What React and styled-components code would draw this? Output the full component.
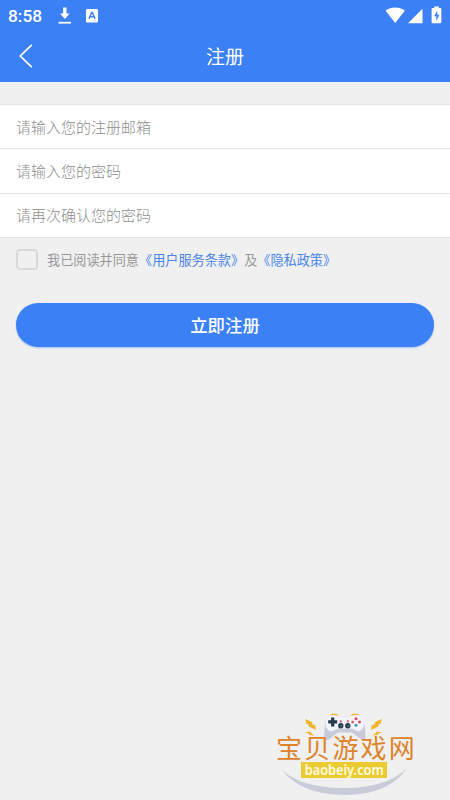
import React from "react";
import styled, { createGlobalStyle } from "styled-components";

const GlobalStyle = createGlobalStyle`
  * {
    box-sizing: border-box;
  }
  body {
    margin: 0;
    background: #f0f0f0;
    font-family: Roboto, "Noto Sans CJK SC", sans-serif;
  }
`;

const App = () => {
  return (
    <Screen lang="zh-CN">
      <GlobalStyle />
      <Header>
        <StatusBar>
          <Clock>8:58</Clock>
          <DownloadIcon />
          <LanguageIcon />
          <StatusRight>
            <SignalIcons />
          </StatusRight>
        </StatusBar>
        <NavBar>
          <BackButton aria-label="返回">
            <svg width="14" height="24" viewBox="0 0 14 24" fill="none" stroke="#fff" strokeWidth="1.7">
              <path d="M12.8 0.8L1.3 12l11.5 11.2" />
            </svg>
          </BackButton>
          <Title>注册</Title>
        </NavBar>
      </Header>
      <Form>
        <Field>
          <Input type="text" placeholder="请输入您的注册邮箱" />
        </Field>
        <Field>
          <Input type="password" placeholder="请输入您的密码" />
        </Field>
        <Field>
          <Input type="password" placeholder="请再次确认您的密码" />
        </Field>
      </Form>
      <Agreement>
        <Checkbox type="checkbox" />
        <span>
          我已阅读并同意<Link>《用户服务条款》</Link>及<Link>《隐私政策》</Link>
        </span>
      </Agreement>
      <Submit>立即注册</Submit>
      <Watermark>
        <SiteLogo />
      </Watermark>
    </Screen>
  );
};

//Icons
const DownloadIcon = () => (
  <svg width="14" height="18" viewBox="0 0 14 18" fill="#fff">
    <path d="M5.1 0.4h3.4v6.1h3.2L6.9 12 2 6.5h3.1z" />
    <path d="M0.6 14.8h12.4v1.8H0.6z" />
  </svg>
);

const LanguageIcon = () => (
  <LanguageSvg width="12" height="14" viewBox="0 0 12 14">
    <rect width="12" height="13.5" rx="1.2" fill="#fff" />
    <path d="M3 9.8L5.7 3.4h.7L9 9.8M4 7.8h4" fill="none" stroke="#3b80f5" strokeWidth="1.5" />
    <path d="M6.5 11.7h4" stroke="#b5cdf7" strokeWidth="0.8" />
  </LanguageSvg>
);

const SignalIcons = () => (
  <svg width="60" height="20" viewBox="0 0 60 20" fill="#fff">
    <path d="M2.6 4.7C7.9 0.4 16.4 0.4 21.8 4.7L12.2 17z" />
    <path d="M39.5 2.8V17.3H25z" />
    <path d="M51.2 0.6h4.6v1.4h1.5q1 0 1 1V16.3q0 1-1 1h-7.7q-1 0-1-1V3q0-1 1-1h1.6z" />
    <path d="M54.3 4.6l-3.2 5.7h2.2v4.5l3.2-6h-2.2z" fill="#3b80f5" />
  </svg>
);

const SiteLogo = () => (
  <svg width="150" height="92" viewBox="0 0 150 92">
    <path d="M11 61Q30 80 74 80Q117 80 137 60Q119 87 75 87Q31 87 11 61z" fill="#c9cbd9" />
    <g fill="#f0b52f">
      <path d="M35.3 11l7 3.2v2.4l3 .4.6 5-7.6-3.8.3-1.9-2.3-.4z" />
      <path d="M111.7 11l-7 3.2v2.4l-3 .4-.6 5 7.6-3.8-.3-1.9 2.3-.4z" />
      <path d="M35 24.3l5.4-.8 1 1.8 3.2 2.2-5-.4-1.3-1.6z" />
      <path d="M112 24.3l-5.4-.8-1 1.8-3.2 2.2 5-.4 1.3-1.6z" />
      <path d="M60 8.5q0-2.8 2-2.8h4.5q1.7 0 1.7 2.8zM81 8.5q0-2.8 2-2.8h4.5q1.7 0 1.7 2.8z" />
    </g>
    <path
      d="M61 7.3Q68 6.7 71 8.8H78Q82 6.7 88 7.3Q93 8.3 93.7 14Q96 24 95.3 30Q94 34 90.5 31L82 24.5H68L59.5 31Q56 34 54.6 30Q53.8 24 55.6 14Q56.5 8.5 61 7.3z"
      fill="#c7cad9"
    />
    <path
      d="M61 7.3Q68 6.7 71 8.8H78Q82 6.7 88 7.3Q93.3 8.3 93.8 14Q94.3 19 91 22Q89 24 86 22.5L82 20.5H68L63 23Q60 24 58 22Q55 19 55.5 14Q56 8.5 61 7.3z"
      fill="#f3f4fa"
    />
    <path d="M62.7 9.4v9M58.2 13.9h9" stroke="#263a50" strokeWidth="3.2" />
    <circle cx="70.8" cy="13.4" r="1.1" fill="#d34e61" />
    <circle cx="77.8" cy="13.4" r="1.1" fill="#d34e61" />
    <circle cx="70.8" cy="17.8" r="2.7" fill="#263a50" />
    <circle cx="77.8" cy="17.8" r="2.7" fill="#263a50" />
    <circle cx="71.3" cy="17.8" r="0.9" fill="#63778c" />
    <circle cx="78.3" cy="17.8" r="0.9" fill="#63778c" />
    <circle cx="86" cy="10.7" r="1.5" fill="#d84c5e" />
    <circle cx="82.7" cy="14" r="1.5" fill="#df6877" />
    <circle cx="89.5" cy="14" r="1.5" fill="#d84c5e" />
    <circle cx="86" cy="17.3" r="1.5" fill="#3e9bb5" />
    <LogoName x="6" y="50.3">宝贝游戏网</LogoName>
    <rect x="31" y="54" width="86" height="16" fill="#eccb32" />
    <LogoDomain x="74.2" y="66.6" textLength="79" lengthAdjust="spacingAndGlyphs">baobeiy.com</LogoDomain>
  </svg>
);

const Screen = styled.div`
  position: relative;
  width: 100%;
  height: 100vh;
  overflow: hidden;
  background: #f0f0f0;
`;

const Header = styled.header`
  height: 82px;
  background: #3b80f5;
  color: #fff;
`;

const StatusBar = styled.div`
  height: 31px;
  display: flex;
  align-items: center;
  padding: 0 7px 0 8px;
`;

const Clock = styled.span`
  width: 50px;
  padding-top: 2px;
  font-size: 17.3px;
  font-weight: 500;
  line-height: 29px;
`;

const LanguageSvg = styled.svg`
  margin-left: 14px;
`;

const StatusRight = styled.div`
  display: flex;
  margin-left: auto;
`;

const NavBar = styled.div`
  height: 51px;
  display: grid;
  grid-template-columns: 60px 1fr 60px;
  align-items: center;
`;

const BackButton = styled.button`
  display: flex;
  padding: 0 0 1px 19px;
  border: 0;
  background: none;
`;

const Title = styled.h1`
  margin: 0;
  padding-top: 2px;
  font-size: 19px;
  font-weight: 400;
  line-height: 28px;
  text-align: center;
`;

const Form = styled.div`
  margin-top: 22px;
  border-top: 1px solid #e2e2e2;
`;

const Field = styled.div`
  height: 44.4px;
  border-bottom: 1px solid #e2e2e2;
  background: #fff;
`;

const Input = styled.input`
  display: block;
  width: 100%;
  height: 100%;
  padding: 2px 16px 0;
  border: 0;
  outline: 0;
  background: transparent;
  font-family: inherit;
  font-size: 15px;
  &::placeholder {
    color: #8e8e8e;
    font-weight: 300;
  }
`;

const Agreement = styled.label`
  height: 44px;
  display: flex;
  align-items: center;
  padding-left: 16px;
  color: #999;
  font-family: "Noto Sans CJK SC", sans-serif;
  font-size: 13.15px;
  line-height: 20px;
`;

const Checkbox = styled.input`
  appearance: none;
  width: 22px;
  height: 21px;
  margin: 0 9px 1px 0;
  border: 2px solid #d9d9d9;
  border-radius: 4px;
`;

const Link = styled.a`
  color: #4a85e8;
`;

const Submit = styled.button`
  display: block;
  width: calc(100% - 32px);
  height: 44px;
  margin: 21px 16px 0;
  padding: 0 0 2px;
  border: 0;
  border-radius: 22px;
  background: #3b80f5;
  box-shadow: 0 1px 2px rgba(59, 128, 245, 0.4);
  color: #fff;
  font-family: inherit;
  font-size: 17.4px;
  font-weight: 500;
`;

const Watermark = styled.div`
  position: absolute;
  right: 30px;
  bottom: 0;
  display: flex;
`;

const LogoName = styled.text`
  fill: #dd842a;
  font-family: "Noto Sans CJK SC", sans-serif;
  font-size: 26px;
  font-weight: 400;
  letter-spacing: 2.2px;
`;

const LogoDomain = styled.text`
  fill: #fffce0;
  font-family: "Noto Sans", sans-serif;
  font-size: 14.5px;
  font-weight: 600;
  text-anchor: middle;
`;

export default App;
